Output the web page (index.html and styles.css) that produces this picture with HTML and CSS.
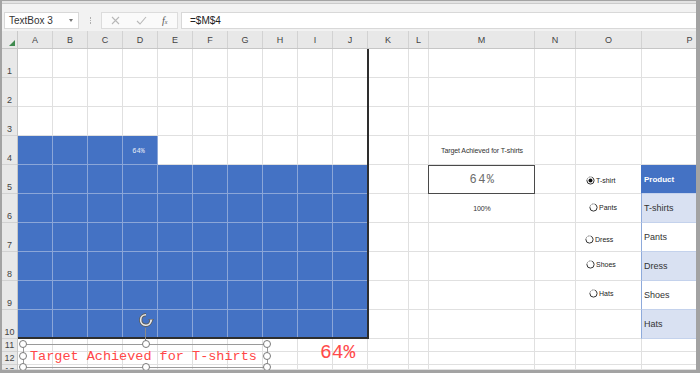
FILE: index.html
```html
<!DOCTYPE html>
<html>
<head>
<meta charset="utf-8">
<title>Sheet</title>
<link rel="stylesheet" href="styles.css">
</head>
<body>
<div class="window">
  <div class="topstrip"></div>
  <div class="fbar">
    <div class="namebox"><span class="nb-text">TextBox 3</span><span class="caret"></span></div>
    <div class="grip"><i></i><i></i><i></i></div>
    <div class="fbtns">
      <svg class="ico-x" width="9" height="9" viewBox="0 0 9 9"><path d="M1 1L8 8M8 1L1 8" stroke="#b8b8b8" stroke-width="1.1" fill="none"/></svg>
      <svg class="ico-ok" width="11" height="9" viewBox="0 0 11 9"><path d="M1 5L4 8L10 1" stroke="#b8b8b8" stroke-width="1.1" fill="none"/></svg>
      <span class="fx"><i>f</i><small>x</small></span>
    </div>
    <div class="finput">=$M$4</div>
  </div>
  <div class="sheet">
    <div class="corner"><span class="tri"></span></div>
    <div class="colheads">
      <span>A</span><span>B</span><span>C</span><span>D</span><span>E</span><span>F</span><span>G</span><span>H</span><span>I</span><span>J</span><span>K</span><span>L</span><span>M</span><span>N</span><span>O</span><span>P</span>
    </div>
    <div class="rowheads">
      <span>1</span><span>2</span><span>3</span><span>4</span><span>5</span><span>6</span><span>7</span><span>8</span><span>9</span><span>10</span><span class="sm">11</span><span class="sm">12</span><span class="sm last">13</span>
    </div>
    <div class="body">
      <div class="vlines"><i></i><i></i><i></i><i></i><i></i><i></i><i></i><i></i><i></i><i></i><i></i><i></i><i></i><i></i><i></i><i></i></div>
      <div class="hlines"><i></i><i></i><i></i><i></i><i></i><i></i><i></i><i></i><i></i><i></i><i></i><i></i><i></i></div>

      <div class="blue blue-top"></div>
      <div class="blue blue-main"></div>
      <div class="d4label">64%</div>
      <div class="chartframe"></div>

      <div class="m4">Target Achieved for T-shirts</div>
      <div class="m5"><div class="kpi">64%</div></div>
      <div class="m6">100%</div>

      <div class="radio r5">
        <svg width="9" height="9" viewBox="0 0 9 9"><circle cx="4.5" cy="4.5" r="3.6" fill="#fff" stroke="#333" stroke-width="1" stroke-dasharray="12 1.2 1 1.2 1 1.2"/><circle cx="4.5" cy="4.5" r="2" fill="#111"/></svg>
        <span>T-shirt</span>
      </div>
      <div class="radio r6">
        <svg width="9" height="9" viewBox="0 0 9 9"><circle cx="4.5" cy="4.5" r="3.6" fill="#fff" stroke="#333" stroke-width="1" stroke-dasharray="12 1.2 1 1.2 1 1.2"/></svg>
        <span>Pants</span>
      </div>
      <div class="radio r7">
        <svg width="9" height="9" viewBox="0 0 9 9"><circle cx="4.5" cy="4.5" r="3.6" fill="#fff" stroke="#333" stroke-width="1" stroke-dasharray="12 1.2 1 1.2 1 1.2"/></svg>
        <span>Dress</span>
      </div>
      <div class="radio r8">
        <svg width="9" height="9" viewBox="0 0 9 9"><circle cx="4.5" cy="4.5" r="3.6" fill="#fff" stroke="#333" stroke-width="1" stroke-dasharray="12 1.2 1 1.2 1 1.2"/></svg>
        <span>Shoes</span>
      </div>
      <div class="radio r9">
        <svg width="9" height="9" viewBox="0 0 9 9"><circle cx="4.5" cy="4.5" r="3.6" fill="#fff" stroke="#333" stroke-width="1" stroke-dasharray="12 1.2 1 1.2 1 1.2"/></svg>
        <span>Hats</span>
      </div>

      <div class="pcell p5 phead">Product</div>
      <div class="pcell p6 band">T-shirts</div>
      <div class="pcell p7">Pants</div>
      <div class="pcell p8 band">Dress</div>
      <div class="pcell p9">Shoes</div>
      <div class="pcell p10 band">Hats</div>

      <div class="big64">64%</div>

      <div class="rotate">
        <svg width="16" height="16" viewBox="0 0 16 16">
          <path d="M13 8.6A5.2 5.2 0 1 1 8 2.8" fill="none" stroke="#5e5e5e" stroke-width="3.4"/>
          <path d="M10.2 7L13.2 11.2L16 6.9Z" fill="#5e5e5e"/>
          <path d="M13 8.6A5.2 5.2 0 1 1 8 2.8" fill="none" stroke="#e9e9e9" stroke-width="1.6"/>
          <path d="M11.6 7.7L13.2 9.9L14.6 7.6Z" fill="#e9e9e9"/>
        </svg>
      </div>
      <div class="stem"></div>
      <div class="textbox">
        <span class="tb-text">Target Achieved for T-shirts</span>
        <i class="h h-tl"></i><i class="h h-tc"></i><i class="h h-tr"></i>
        <i class="h h-ml"></i><i class="h h-mr"></i>
        <i class="h h-bl"></i><i class="h h-bc"></i><i class="h h-br"></i>
      </div>
    </div>
  </div>
</div>
</body>
</html>
```

FILE: styles.css
```css
* { box-sizing: border-box; }
html, body { margin: 0; padding: 0; }
body {
  width: 700px;
  height: 373px;
  overflow: hidden;
  font-family: "Liberation Sans", Arial, sans-serif;
  background: #fff;
}
.window {
  width: 700px;
  height: 373px;
  border-style: solid;
  border-color: #a3a3a3;
  border-width: 1px 4px 3px 2px;
  display: flex;
  flex-direction: column;
  overflow: hidden;
  background: #fff;
}
.topstrip {
  height: 3px;
  flex: none;
  background: #e2e2e2;
  border-bottom: 1px solid #cbcbcb;
}
.fbar {
  height: 27px;
  flex: none;
  background: #f2f2f2;
  display: flex;
  align-items: flex-start;
  padding-top: 8px;
  padding-left: 2px;
}
.namebox {
  width: 75px;
  height: 17px;
  background: #fff;
  border: 1px solid #d8d8d8;
  display: flex;
  align-items: center;
  justify-content: space-between;
  padding: 0 4px 0 4px;
  font-size: 10px;
  color: #333;
}
.caret {
  width: 0; height: 0;
  border-left: 2.5px solid transparent;
  border-right: 2.5px solid transparent;
  border-top: 3px solid #777;
  margin-right: 1px;
}
.grip {
  width: 22px;
  height: 17px;
  display: flex;
  flex-direction: column;
  align-items: center;
  justify-content: center;
  gap: 1px;
}
.grip i {
  width: 1px; height: 1.5px;
  background: #b0b0b0;
}
.fbtns {
  width: 77px;
  height: 17px;
  background: #fafafa;
  border: 1px solid #dcdcdc;
  display: flex;
  align-items: center;
  padding-left: 9px;
}
.ico-x { margin-right: 16px; }
.ico-ok { margin-right: 15px; }
.fx {
  font-family: "Liberation Serif", serif;
  color: #555;
  font-size: 10px;
}
.fx small { font-size: 6px; font-style: italic; }
.finput {
  flex: 1;
  height: 17px;
  margin-left: 3px;
  background: #fff;
  border: 1px solid #d8d8d8;
  border-right: none;
  font-size: 10px;
  color: #222;
  padding-left: 8px;
  line-height: 15px;
}

/* sheet */
.sheet {
  flex: 1;
  display: grid;
  grid-template-columns: 16px 1fr;
  grid-template-rows: 18px 1fr;
  overflow: hidden;
  min-height: 0;
}
.corner {
  background: #e8e8e8;
  border-right: 1px solid #c9c9c9;
  border-bottom: 1px solid #c6c6c6;
  position: relative;
}
.tri {
  position: absolute;
  right: 2px;
  bottom: 2px;
  width: 0; height: 0;
  border-left: 6px solid transparent;
  border-bottom: 6px solid #3f8a4f;
}
.colheads {
  display: grid;
  grid-template-columns: repeat(10, 35px) 41px 20px 106px 41px 66px 96px;
  background: #e8e8e8;
  border-bottom: 1px solid #c6c6c6;
  overflow: hidden;
}
.colheads span {
  display: flex;
  align-items: center;
  justify-content: center;
  font-size: 9px;
  color: #444;
  border-right: 1px solid #d2d2d2;
  padding-top: 1px;
}
.rowheads {
  display: grid;
  grid-template-rows: repeat(10, 29px) 13px 13px 5px;
  background: #e8e8e8;
  border-right: 1px solid #c6c6c6;
  overflow: hidden;
}
.rowheads span {
  display: flex;
  align-items: flex-end;
  justify-content: center;
  font-size: 9px;
  color: #444;
  border-bottom: 1px solid #d2d2d2;
  padding-bottom: 1px;
  line-height: 10px;
}
.rowheads span.sm { align-items: center; padding-bottom: 0; }
.rowheads span.last { align-items: flex-start; padding-top: 1px; overflow: hidden; }

.body {
  position: relative;
  display: grid;
  grid-template-columns: repeat(10, 35px) 41px 20px 106px 41px 66px 96px;
  grid-template-rows: repeat(10, 29px) 13px 13px 5px;
  overflow: hidden;
}
.vlines {
  grid-area: 1 / 1 / -1 / -1;
  display: grid;
  grid-template-columns: inherit;
}
.vlines i { border-right: 1px solid #e0e0e0; }
.hlines {
  grid-area: 1 / 1 / -1 / -1;
  display: grid;
  grid-template-rows: inherit;
}
.hlines i { border-bottom: 1px solid #e0e0e0; }

.blue {
  background-color: #4472c4;
  background-image:
    repeating-linear-gradient(90deg, transparent 0 34px, #8ba6d8 34px 35px),
    repeating-linear-gradient(180deg, transparent 0 28px, #8ba6d8 28px 29px);
}
.blue-top { grid-area: 4 / 1 / 5 / 5; }
.blue-main { grid-area: 5 / 1 / 11 / 11; }
.d4label {
  grid-area: 4 / 4 / 5 / 5;
  display: flex;
  align-items: center;
  justify-content: center;
  padding-right: 4px;
  font-family: "Liberation Mono", monospace;
  font-size: 7px;
  color: #e6ecf7;
}
.chartframe {
  grid-area: 1 / 1 / 11 / 11;
  border-right: 2px solid #2e2e2e;
  border-bottom: 2px solid #2e2e2e;
  margin-right: -1px;
}

.m4, .m6 {
  display: flex;
  align-items: center;
  justify-content: center;
  font-size: 7px;
  color: #333;
  letter-spacing: -0.1px;
}
.m4 { grid-area: 4 / 13; }
.m6 { grid-area: 6 / 13; }
.m5 { grid-area: 5 / 13; margin-left: -1px; }
.kpi {
  height: 100%;
  border: 1px solid #4a4a4a;
  display: flex;
  align-items: center;
  justify-content: center;
  font-family: "Liberation Mono", monospace;
  font-size: 12px;
  letter-spacing: 1.5px;
  padding-left: 2px;
  color: #6b6b6b;
}

.radio {
  display: flex;
  align-items: center;
  gap: 1px;
  font-size: 7px;
  color: #222;
}
.radio svg { flex: none; }
.r5 { grid-area: 5 / 15; padding-left: 10px; padding-top: 2px; }
.r6 { grid-area: 6 / 15; padding-left: 13px; padding-bottom: 2px; }
.r7 { grid-area: 7 / 15; padding-left: 9px; padding-top: 3px; }
.r8 { grid-area: 8 / 15; padding-left: 10px; padding-bottom: 4px; }
.r9 { grid-area: 9 / 15; padding-left: 13px; padding-bottom: 4px; }

.pcell {
  display: flex;
  align-items: center;
  padding-left: 2px;
  font-size: 9px;
  color: #333;
  border-left: 1px solid #8eaadb;
  border-bottom: 1px solid #c4d2ec;
  margin-left: -1px;
  background: #fff;
}
.pcell.band { background: #d9e1f2; }
.pcell.phead {
  background: #4472c4;
  color: #fff;
  font-weight: bold;
  font-size: 8px;
  border-left-color: #4472c4;
}
.p5 { grid-area: 5 / 16; }
.p6 { grid-area: 6 / 16; }
.p7 { grid-area: 7 / 16; }
.p8 { grid-area: 8 / 16; }
.p9 { grid-area: 9 / 16; }
.p10 { grid-area: 10 / 16; }

.big64 {
  grid-area: 11 / 9 / 13 / 11;
  display: flex;
  align-items: center;
  padding-left: 22px;
  padding-top: 1px;
  font-family: "Liberation Mono", monospace;
  font-size: 19.5px;
  color: #ff4a4a;
}

/* overlays: selected text box */
.textbox {
  position: absolute;
  left: 5px;
  top: 295px;
  width: 245px;
  height: 24px;
  border: 1px solid #9a9a9a;
  display: flex;
  align-items: center;
  padding-left: 6px;
}
.tb-text {
  font-family: "Liberation Mono", monospace;
  font-size: 13.5px;
  color: #ff4747;
  white-space: nowrap;
  padding-top: 1px;
}
.h {
  position: absolute;
  width: 8px;
  height: 8px;
  border-radius: 50%;
  background: #fff;
  border: 1.5px solid #7a7a7a;
  transform: translate(-50%, -50%);
}
.h-tl { left: -1px; top: -1px; }
.h-tc { left: 50%; top: -1px; }
.h-tr { left: 100%; top: -1px; }
.h-ml { left: -1px; top: 50%; }
.h-mr { left: 100%; top: 50%; }
.h-bl { left: -1px; top: 100%; }
.h-bc { left: 50%; top: 100%; }
.h-br { left: 100%; top: 100%; }
.rotate {
  position: absolute;
  left: 120px;
  top: 263px;
  width: 16px;
  height: 16px;
}
.rotate svg { display: block; }
.stem {
  position: absolute;
  left: 127px;
  top: 279px;
  width: 1px;
  height: 16px;
  background: #8a8a8a;
}
```
